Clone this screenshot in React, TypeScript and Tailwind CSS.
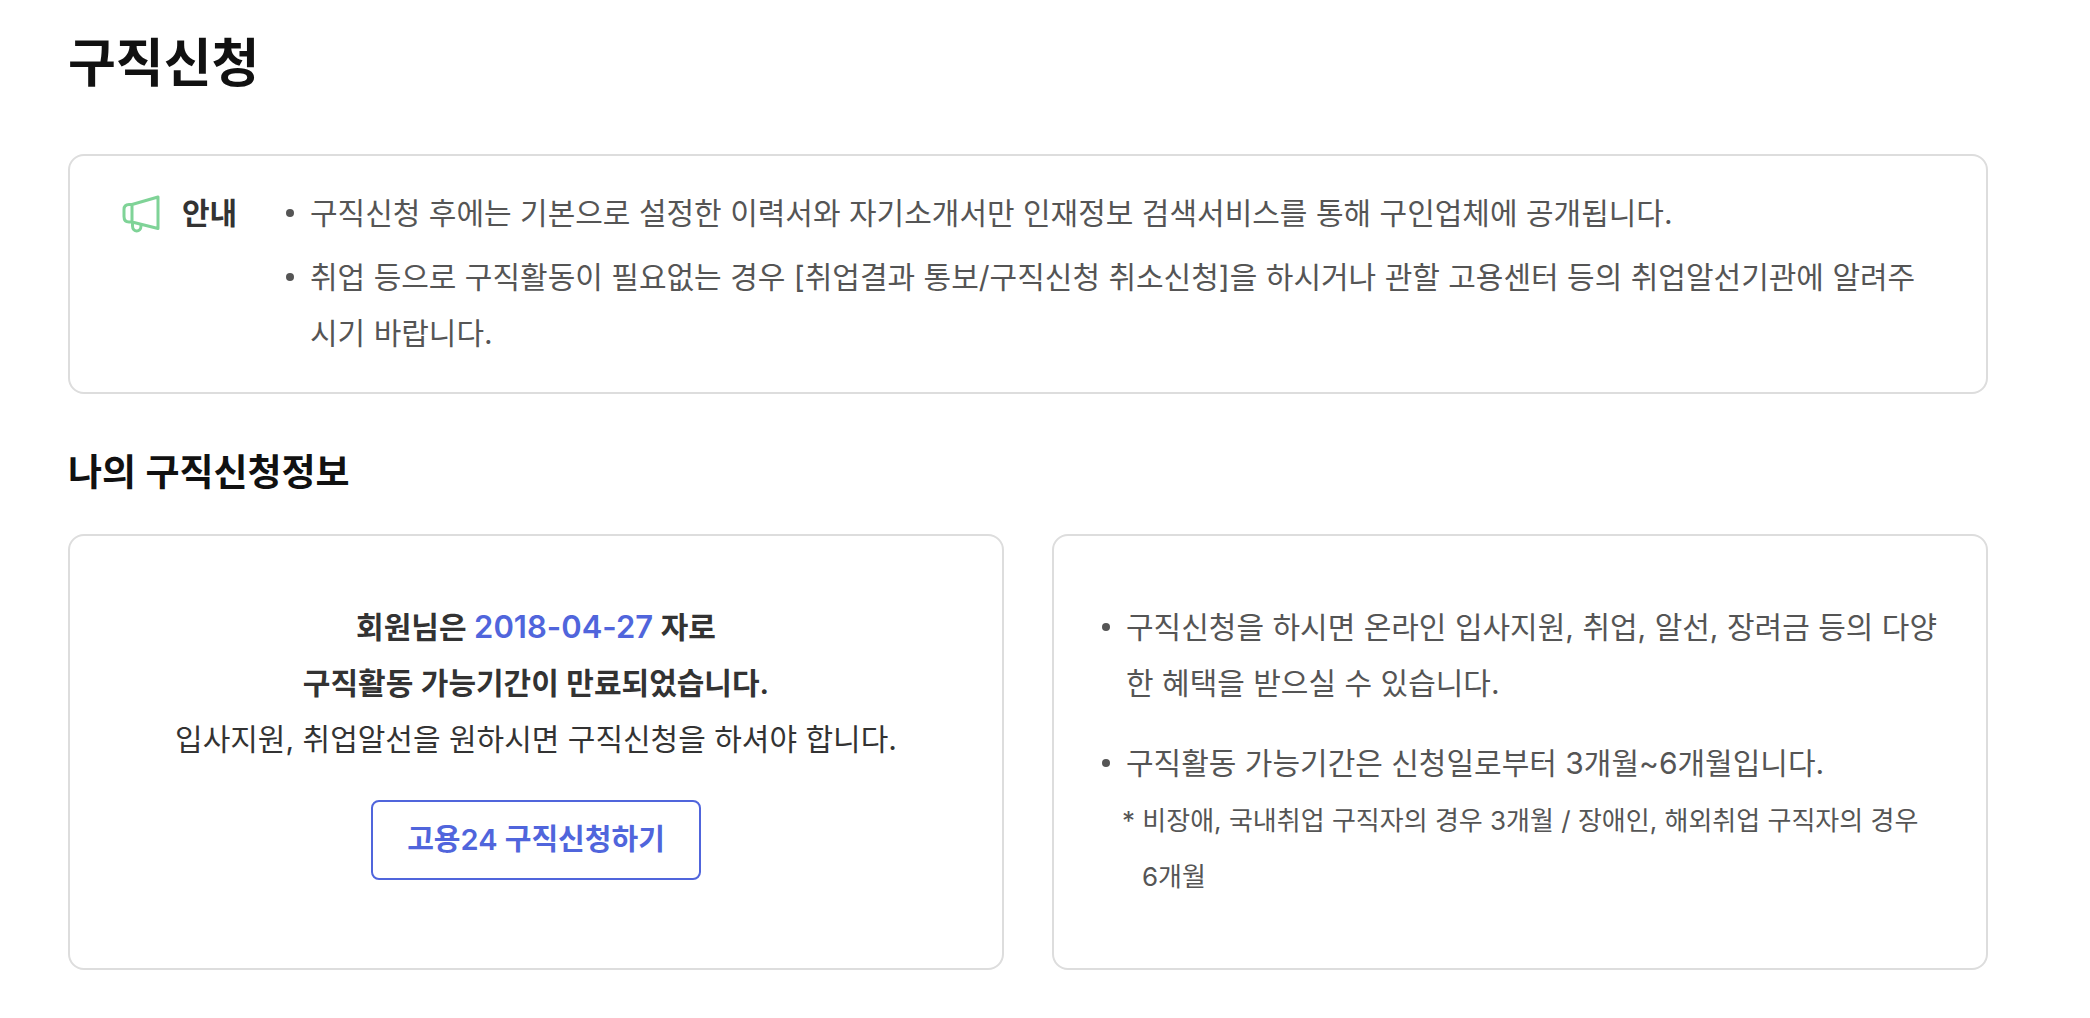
import type { ReactNode } from 'react';
import clsx from 'clsx';

function MegaphoneIcon() {
  return (
    <svg
      width="40"
      height="40"
      viewBox="0 0 40 40"
      fill="none"
      stroke="#7fd397"
      strokeWidth="3"
      strokeLinejoin="round"
      aria-hidden="true"
    >
      <path d="M12 11.5 L38 4 V35.5 L12 29 Z" />
      <path d="M12 11.5 H9 C5.5 11.5 4 13.5 4 16.5 V23.5 C4 27 5.5 29 9 29 H12" />
      <path d="M12.5 29.5 V33 C12.5 39.5 21 39.5 21 33 V31.5" />
    </svg>
  );
}

type BulletItemProps = {
  children: ReactNode;
  className?: string;
};

function BulletItem({ children, className }: BulletItemProps) {
  return (
    <li className={clsx('flex gap-4', className)}>
      <span className="mt-6 size-2 shrink-0 rounded-full bg-[#555]" />
      <div className="min-w-0 flex-1">{children}</div>
    </li>
  );
}

export default function App() {
  return (
    <main className="pt-[26px] pr-[102px] pb-12 pl-[68px] font-['Inter','Noto_Sans_CJK_KR',sans-serif] text-[30px] leading-[56px] break-all text-[#555]">
      <h1 className="text-[52px] leading-[76px] font-semibold text-[#111]">구직신청</h1>

      <section className="mt-[52px] flex rounded-2xl border-2 border-[#ddd] pt-[29px] pr-[68px] pb-[31px] pl-[50px]">
        <div className="flex h-14 w-[166px] shrink-0 items-center gap-[22px]">
          <MegaphoneIcon />
          <strong className="font-semibold text-[#333]">안내</strong>
        </div>
        <ul className="flex min-w-0 flex-1 flex-col gap-2">
          <BulletItem>
            구직신청 후에는 기본으로 설정한 이력서와 자기소개서만 인재정보 검색서비스를 통해
            구인업체에 공개됩니다.
          </BulletItem>
          <BulletItem>
            취업 등으로 구직활동이 필요없는 경우 [취업결과 통보/구직신청 취소신청]을 하시거나 관할
            고용센터 등의 취업알선기관에 알려주시기 바랍니다.
          </BulletItem>
        </ul>
      </section>

      <h2 className="mt-[51px] text-[37px] font-semibold text-[#111]">나의 구직신청정보</h2>

      <div className="mt-[33px] grid grid-cols-2 gap-12">
        <section className="rounded-2xl border-2 border-[#ddd] px-12 py-[63px] text-center text-[#333]">
          <p className="font-semibold">
            회원님은 <span className="text-[31px] text-[#5065dc]">2018-04-27</span> 자로
            <br />
            구직활동 가능기간이 만료되었습니다.
          </p>
          <p>입사지원, 취업알선을 원하시면 구직신청을 하셔야 합니다.</p>
          <button
            type="button"
            className="mt-[33px] h-20 rounded-lg border-2 border-[#5065dc] px-[34px] text-[29px] font-semibold text-[#5065dc]"
          >
            고용24 구직신청하기
          </button>
        </section>

        <section className="rounded-2xl border-2 border-[#ddd] px-12 py-[63px]">
          <ul className="flex flex-col gap-6">
            <BulletItem>
              구직신청을 하시면 온라인 입사지원, 취업, 알선, 장려금 등의 다양한 혜택을 받으실 수
              있습니다.
            </BulletItem>
            <BulletItem>
              구직활동 가능기간은 신청일로부터 3개월~6개월입니다.
              <p className="mt-0.5 pl-4 -indent-5 text-[26px]">
                * 비장애, 국내취업 구직자의 경우 3개월 / 장애인, 해외취업 구직자의 경우 6개월
              </p>
            </BulletItem>
          </ul>
        </section>
      </div>
    </main>
  );
}
